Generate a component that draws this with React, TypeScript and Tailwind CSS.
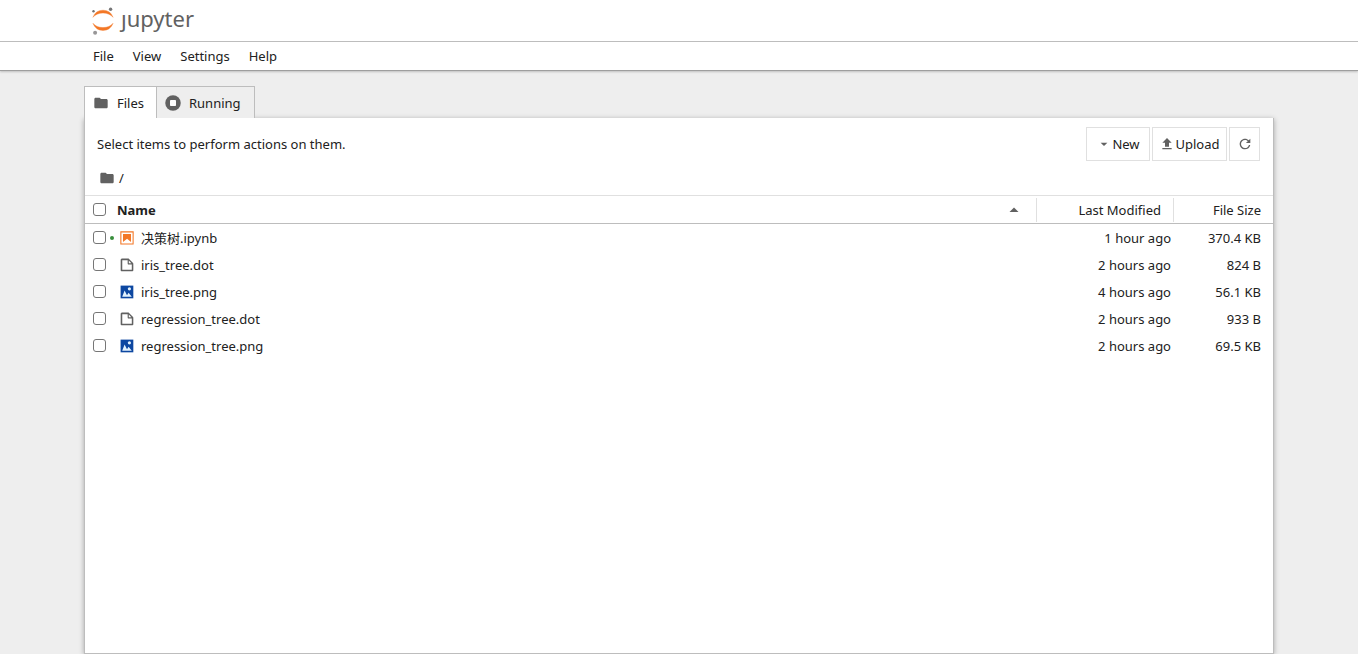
import type { ReactNode } from 'react';

type FileKind = 'notebook' | 'file' | 'image';

const files: { name: string; kind: FileKind; modified: string; size: string; running?: boolean }[] = [
  { name: '决策树.ipynb', kind: 'notebook', modified: '1 hour ago', size: '370.4 KB', running: true },
  { name: 'iris_tree.dot', kind: 'file', modified: '2 hours ago', size: '824 B' },
  { name: 'iris_tree.png', kind: 'image', modified: '4 hours ago', size: '56.1 KB' },
  { name: 'regression_tree.dot', kind: 'file', modified: '2 hours ago', size: '933 B' },
  { name: 'regression_tree.png', kind: 'image', modified: '2 hours ago', size: '69.5 KB' },
];

const menus = ['File', 'View', 'Settings', 'Help'];

function JupyterMark() {
  return (
    <svg width="22" height="28" viewBox="0 0 22 28" aria-hidden="true">
      <path d="M11 20.600c-4.300 0-8.100-1.700-10-4.300a10.600 10.600 0 0 0 20 0c-1.900 2.600-5.700 4.300-10 4.300z" fill="#f37726" stroke="#f37726" strokeWidth="0.400" />
      <path d="M11 6c4.300 0 8.100 1.700 10 4.300a10.600 10.600 0 0 0-20 0c1.900-2.600 5.700-4.300 10-4.300z" fill="#f37726" stroke="#f37726" strokeWidth="0.400" />
      <circle cx="18.600" cy="2.300" r="1.700" fill="#767677" />
      <circle cx="3.100" cy="25.700" r="2" fill="#989798" />
      <circle cx="1.500" cy="4.300" r="1.200" fill="#6f7070" />
    </svg>
  );
}

function FolderIcon() {
  return (
    <svg width="16" height="16" viewBox="0 0 24 24" fill="#616161" className="shrink-0" aria-hidden="true">
      <path d="M10 4H4c-1.100 0-1.990.9-1.990 2L2 18c0 1.100.9 2 2 2h16c1.100 0 2-.9 2-2V8c0-1.100-.9-2-2-2h-8l-2-2z" />
    </svg>
  );
}

function RunningIcon() {
  return (
    <svg width="16" height="16" viewBox="0 0 512 512" fill="#616161" className="shrink-0" aria-hidden="true">
      <circle cx="256" cy="256" r="248" />
      <rect x="160" y="160" width="192" height="192" rx="24" fill="#fff" />
    </svg>
  );
}

function KindIcon({ kind }: { kind: FileKind }) {
  if (kind === 'notebook') {
    return (
      <svg width="16" height="16" viewBox="0 0 22 22" fill="#f37726" className="shrink-0" aria-hidden="true">
        <path d="M18.700 3.300v15.400H3.300V3.300h15.400m1.500-1.500H1.800v18.300h18.300l.1-18.300z" />
        <path d="M16.500 16.500l-5.400-4.300-5.600 4.300v-11h11z" />
      </svg>
    );
  }
  if (kind === 'image') {
    return (
      <svg width="16" height="16" viewBox="0 0 22 22" className="shrink-0" aria-hidden="true">
        <path d="M2.200 2.200h17.500v17.500H2.200z" fill="#0d47a1" />
        <circle cx="14.300" cy="6.600" r="2.200" fill="#e3f2fd" />
        <path d="M4.400 17.600l3.300-8.800 3.300 6.600 2.200-3.200 4.400 5.400z" fill="#e3f2fd" />
      </svg>
    );
  }
  return (
    <svg width="16" height="16" viewBox="0 0 22 22" fill="#616161" className="shrink-0" aria-hidden="true">
      <path d="M19.300 8.200l-5.500-5.500c-.3-.3-.7-.5-1.200-.5H3.900c-.8.100-1.600.9-1.600 1.800v14.100c0 .9.700 1.600 1.600 1.600h14.200c.9 0 1.600-.7 1.600-1.600V9.400c.1-.5-.1-.9-.4-1.200zm-5.800-3.300l3.400 3.600h-3.400V4.900zm3.900 12.700H4.700c-.1 0-.2 0-.2-.2V4.700c0-.2.1-.3.2-.3h7.200v4.400s0 .8.300 1.100c.3.3 1.100.3 1.100.3h4.300v7.200s-.1.200-.2.200z" />
    </svg>
  );
}

function ToolButton({ children, label, width }: { children: ReactNode; label: string; width: string }) {
  return (
    <button type="button" aria-label={label} className={`flex h-[34px] items-center justify-center border border-[#e0e0e0] bg-white ${width}`}>
      {children}
    </button>
  );
}

function Tick({ label }: { label: string }) {
  return (
    <input
      type="checkbox"
      aria-label={label}
      className="block size-[13px] shrink-0 appearance-none rounded-[3px] border border-[#767676] bg-white checked:bg-[#1976d2]"
    />
  );
}

export default function App() {
  return (
    <div className="flex min-h-screen flex-col bg-[#eee] font-['Noto_Sans','Noto_Sans_CJK_SC',sans-serif] text-[13px] leading-[18px] text-[#212121]">
      <header className="relative bg-white shadow-[0_1px_2px_rgba(0,0,0,0.2)]">
        <div className="border-b border-[#bdbdbd]">
          <div className="mx-auto flex h-[41px] max-w-[1190px] items-center px-2">
            <a href="#" aria-label="jupyter" className="flex items-center gap-[7px] text-[#616161]">
              <JupyterMark />
              <span className="pb-[6px] text-[22px] leading-[30px]">ȷupyter</span>
            </a>
          </div>
        </div>
        <nav className="border-b border-[#9e9e9e]">
          <div className="mx-auto flex h-7 max-w-[1190px] items-center gap-[19px] px-[9px]">
            {menus.map((m) => (
              <button key={m} type="button">
                {m}
              </button>
            ))}
          </div>
        </nav>
      </header>

      <main className="mx-auto flex w-full max-w-[1190px] grow flex-col pt-[15px]">
        <div role="tablist" className="relative z-10 flex">
          <button type="button" role="tab" aria-selected="true" className="flex h-8 w-[73px] items-center gap-2 border-t border-r border-l border-[#bdbdbd] bg-white pl-2">
            <FolderIcon />
            Files
          </button>
          <button type="button" role="tab" aria-selected="false" className="flex h-8 w-[98px] items-center gap-2 border-t border-r border-[#bdbdbd] bg-[#eee] pl-2">
            <RunningIcon />
            Running
          </button>
        </div>

        <section className="flex grow flex-col border-r border-b border-l border-[#bdbdbd] bg-white shadow-[0_1px_5px_rgba(0,0,0,0.3)]">
          <div className="flex items-center justify-between pt-[9px] pr-[13px] pl-3">
            <p>Select items to perform actions on them.</p>
            <div className="flex gap-[2px]">
              <ToolButton label="New" width="w-16">
                <svg width="16" height="16" viewBox="0 0 18 18" fill="#616161" aria-hidden="true">
                  <path d="M5.200 7.500L9 11.200l3.800-3.700z" />
                </svg>
                New
              </ToolButton>
              <ToolButton label="Upload" width="w-[75px]">
                <svg width="16" height="16" viewBox="0 0 24 24" fill="#616161" aria-hidden="true">
                  <path d="M9 16h6v-6h4l-7-7-7 7h4zm-4 2h14v2H5z" />
                </svg>
                Upload
              </ToolButton>
              <ToolButton label="Refresh" width="w-[31px]">
                <svg width="16" height="16" viewBox="0 0 18 18" fill="#616161" aria-hidden="true">
                  <path d="M9 13.500c-2.490 0-4.500-2.010-4.500-4.500S6.510 4.500 9 4.500c1.240 0 2.360.52 3.170 1.330L10 8h5V3l-1.760 1.760C12.150 3.680 10.660 3 9 3 5.690 3 3.010 5.690 3.010 9S5.690 15 9 15c2.970 0 5.430-2.160 5.900-5h-1.520c-.46 2-2.240 3.500-4.380 3.500z" />
                </svg>
              </ToolButton>
            </div>
          </div>
          <div className="flex h-[34px] items-center gap-1 pl-[14px]">
            <FolderIcon />
            <a href="#">/</a>
          </div>

          <table className="w-full table-fixed border-separate border-spacing-0">
            <colgroup>
              <col />
              <col className="w-[137px]" />
              <col className="w-[99px]" />
            </colgroup>
            <thead>
              <tr className="h-[29px] *:border-t *:border-b *:border-t-[#e0e0e0] *:border-b-[#bdbdbd]">
                <th className="p-0 text-left font-bold">
                  <div className="flex h-6 items-center border-r border-[#e0e0e0] pr-[13px] pl-2">
                    <Tick label="Select all files" />
                    <span className="grow pl-[11px]">Name</span>
                    <svg width="18" height="18" viewBox="0 0 18 18" fill="#616161" aria-hidden="true">
                      <path d="M4.500 11L9 6.500l4.500 4.500z" />
                    </svg>
                  </div>
                </th>
                <th className="p-0 text-right font-normal">
                  <div className="flex h-6 items-center justify-end border-r border-[#e0e0e0] pr-3">Last Modified</div>
                </th>
                <th className="p-0 pr-3 text-right font-normal">File Size</th>
              </tr>
            </thead>
            <tbody>
              {files.map((f) => (
                <tr key={f.name} className="h-[27px]">
                  <td className="p-0">
                    <div className="flex items-center pl-2">
                      <Tick label={`Select ${f.name}`} />
                      <span className="w-[13px] shrink-0 pl-1">
                        {f.running && <span className="block size-1 rounded-full bg-[#388e3c]" />}
                      </span>
                      <KindIcon kind={f.kind} />
                      <span className="pl-[6px]">{f.name}</span>
                    </div>
                  </td>
                  <td className="p-0 pr-[3px] text-right">{f.modified}</td>
                  <td className="p-0 pr-3 text-right">{f.size}</td>
                </tr>
              ))}
            </tbody>
          </table>
        </section>
      </main>
    </div>
  );
}
